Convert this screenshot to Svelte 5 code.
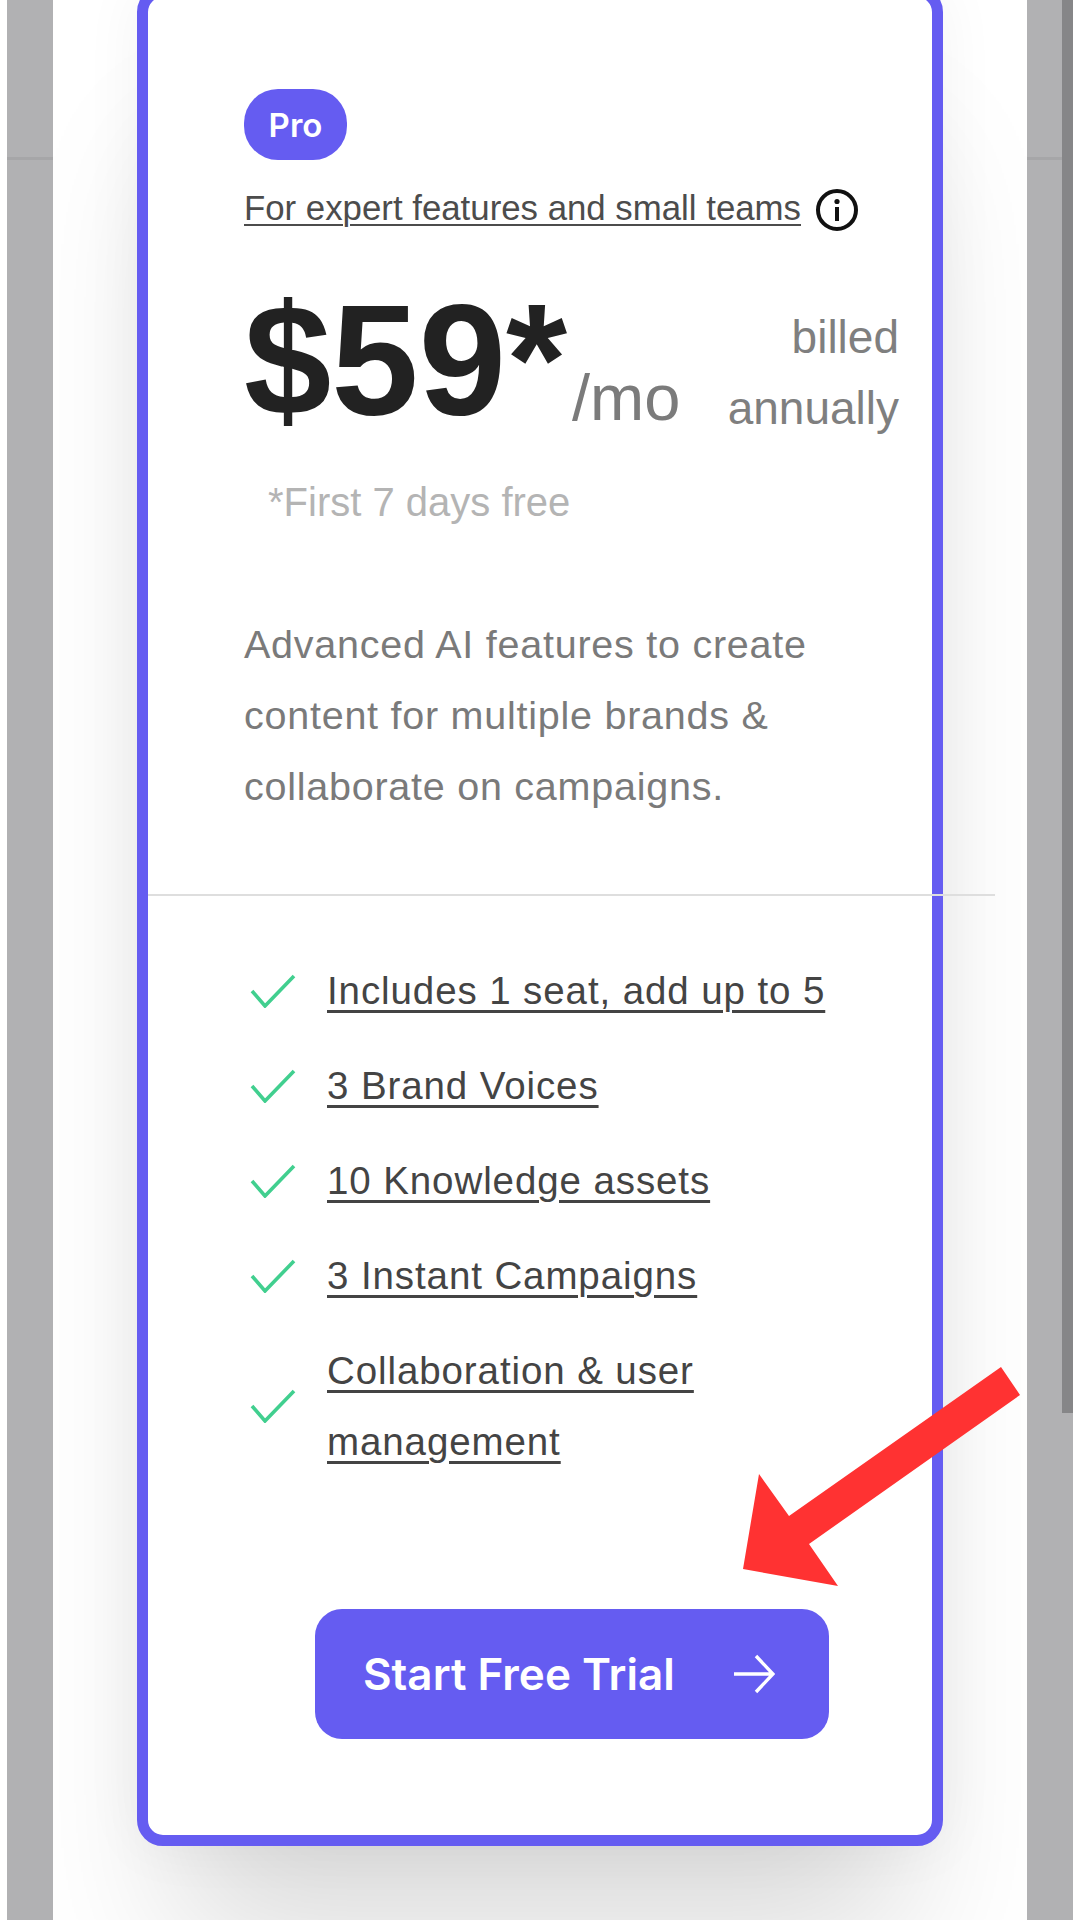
<script>
  const features = [
    "Includes 1 seat, add up to 5",
    "3 Brand Voices",
    "10 Knowledge assets",
    "3 Instant Campaigns",
    "Collaboration & user management"
  ];
</script>

<div class="page">
  <div class="backdrop">
    <div class="panel">
      <div class="card">
        <span class="badge">Pro</span>
        <p class="audience">
          <span class="audience-text">For expert features and small teams</span>
          <svg class="info" viewBox="0 0 44 44" aria-hidden="true">
            <circle cx="22" cy="22" r="19" fill="none" stroke="#111" stroke-width="4" />
            <circle cx="22" cy="13.5" r="2.6" fill="#111" />
            <rect x="20" y="19" width="4" height="14" fill="#111" />
          </svg>
        </p>

        <div class="price-row">
          <span class="price">$59*</span>
          <span class="per">/mo</span>
          <span class="billing">billed<br />annually</span>
        </div>
        <p class="trial-note">*First 7 days free</p>

        <p class="description">Advanced AI features to create content for multiple brands &amp; collaborate on campaigns.</p>

        <div class="divider"></div>

        <ul class="features">
          {#each features as feature}
            <li>
              <svg class="check" viewBox="0 0 46 34" aria-hidden="true">
                <path d="M2 17 L15 32 L44 2" fill="none" stroke="#41cf8f" stroke-width="3.6" />
              </svg>
              <span class="feature-text">{feature}</span>
            </li>
          {/each}
        </ul>

        <button class="cta">
          <span>Start Free Trial</span>
          <svg class="cta-arrow" viewBox="0 0 42 40" aria-hidden="true">
            <path d="M1 20 H39 M23 2 L40 20 L23 38" fill="none" stroke="#fff" stroke-width="3.4" />
          </svg>
        </button>
      </div>
    </div>
  </div>

  <div class="scrollbar"></div>

  <svg class="annotation" viewBox="0 0 1080 1920" aria-hidden="true">
    <polygon points="1001,1367 1020,1395 809,1544 838,1586 743,1569 759,1474 789,1516" fill="#ff3232" />
  </svg>
</div>

<style>
  :global(body) {
    margin: 0;
    background: #fff;
  }

  .page {
    position: relative;
    width: 1080px;
    height: 1920px;
    overflow: hidden;
    font-family: "Liberation Sans", Arial, sans-serif;
  }

  .backdrop {
    box-sizing: border-box;
    width: 1066px;
    height: 1920px;
    margin-left: 7px;
    padding: 0 46px;
    background:
      linear-gradient(#a6a6a8, #a6a6a8) 0 157px / 100% 3px no-repeat,
      #b1b1b3;
  }

  .panel {
    height: 1920px;
    padding-left: 84px;
    overflow: hidden;
    background: #fff;
  }

  .card {
    box-sizing: border-box;
    width: 806px;
    height: 1860px;
    margin-top: -14px;
    padding: 92px 33px 0 96px;
    border: 11.5px solid #655cf1;
    border-radius: 26px;
    background: #fff;
    box-shadow:
      0 130px 140px -40px rgba(0, 0, 0, 0.15),
      0 0 60px rgba(0, 0, 0, 0.05);
  }

  .badge {
    display: flex;
    align-items: center;
    justify-content: center;
    width: 103px;
    height: 71px;
    border-radius: 34px;
    background: #655cf1;
    color: #fff;
    font-family: Inter, "Liberation Sans", sans-serif;
    font-size: 33px;
    font-weight: 600;
  }

  .audience {
    display: flex;
    align-items: center;
    gap: 14px;
    margin: 23px 0 0;
    height: 50px;
    font-size: 34.8px;
    line-height: 50px;
    color: #4c4c4c;
  }

  .audience-text {
    text-decoration: underline;
    text-decoration-thickness: 2px;
    text-underline-offset: 4px;
  }

  .info {
    width: 44px;
    height: 44px;
    margin-top: 3px;
  }

  .price-row {
    display: flex;
    margin-top: 47px;
    height: 160px;
  }

  .price {
    font-size: 157px;
    line-height: 160px;
    font-weight: 700;
    color: #222;
  }

  .per {
    align-self: flex-end;
    margin: 0 0 12px 5px;
    font-size: 65px;
    line-height: 60px;
    color: #7b7b7b;
  }

  .billing {
    align-self: flex-end;
    margin: 0 0 -4px auto;
    font-size: 46px;
    line-height: 71px;
    text-align: right;
    color: #7f7f7f;
  }

  .trial-note {
    margin: 37px 0 0 24px;
    font-size: 40px;
    line-height: 50px;
    color: #b4b4b4;
  }

  .description {
    margin: 82px 0 0;
    font-size: 39.5px;
    letter-spacing: 0.75px;
    line-height: 71px;
    color: #7a7a7a;
  }

  .divider {
    height: 2px;
    margin: 72px -96px 0 -96px;
    background: #dedede;
    position: relative;
  }

  .features {
    display: flex;
    flex-direction: column;
    gap: 24px;
    margin: 59px 0 0;
    padding: 0 0 0 6px;
    list-style: none;
  }

  .features li {
    display: flex;
    align-items: center;
    gap: 31px;
    font-size: 38.5px;
    letter-spacing: 0.9px;
    line-height: 71px;
    color: #444;
  }

  .check {
    flex: none;
    width: 46px;
    height: 34px;
  }

  .feature-text {
    text-decoration: underline;
    text-decoration-thickness: 3px;
    text-underline-offset: 6px;
  }

  .cta {
    display: flex;
    align-items: center;
    gap: 58px;
    box-sizing: border-box;
    width: 514px;
    height: 130px;
    margin: 132px 0 0 71px;
    padding: 0 0 0 48px;
    border: 0;
    border-radius: 27px;
    background: #655cf1;
    color: #fff;
    font-family: Inter, "Liberation Sans", sans-serif;
    font-size: 44px;
    font-weight: 600;
  }

  .cta-arrow {
    width: 42px;
    height: 40px;
  }

  .scrollbar {
    position: absolute;
    top: 0;
    left: 1062px;
    width: 11px;
    height: 1413px;
    background: #868688;
  }

  .annotation {
    position: absolute;
    inset: 0;
    width: 1080px;
    height: 1920px;
    pointer-events: none;
  }
</style>
